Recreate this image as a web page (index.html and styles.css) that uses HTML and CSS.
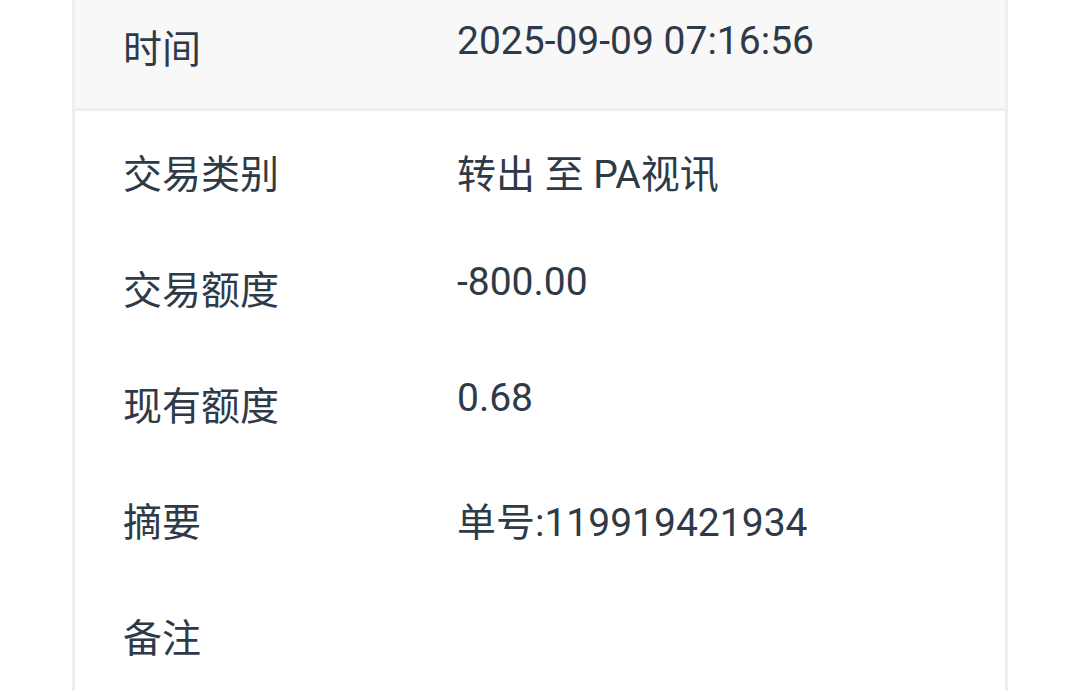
FILE: index.html
```html
<!DOCTYPE html>
<html lang="zh-CN">
<head>
<meta charset="utf-8">
<link rel="stylesheet" href="styles.css">
</head>
<body>
<div class="card">
  <div class="row head"><span class="label">时间</span><span class="value">2025-09-09 07:16:56</span></div>
  <div class="row"><span class="label">交易类别</span><span class="value">转出 至 PA视讯</span></div>
  <div class="row"><span class="label">交易额度</span><span class="value">-800.00</span></div>
  <div class="row"><span class="label">现有额度</span><span class="value">0.68</span></div>
  <div class="row"><span class="label">摘要</span><span class="value">单号:119919421934</span></div>
  <div class="row"><span class="label">备注</span><span class="value"></span></div>
</div>
</body>
</html>
```

FILE: styles.css
```css
html, body {
  margin: 0;
  padding: 0;
  background: #ffffff;
  overflow: hidden;
}
body {
  font-family: Roboto, "Noto Sans CJK SC", sans-serif;
  font-size: 39px;
  color: #2f3a48;
}
.card {
  margin-left: 72px;
  width: 930px;
  border-left: 3px solid #ededed;
  border-right: 3px solid #ededed;
}
.row {
  display: flex;
  align-items: flex-start;
  box-sizing: border-box;
  height: 116px;
  padding-top: 32px;
  line-height: normal;
}
.head {
  height: 111px;
  padding-top: 18px;
  background: #f8f8f8;
  border-bottom: 3px solid #eeeeee;
}
.label {
  width: 334px;
  padding-left: 48px;
  flex: none;
}
.value {
  flex: 1;
}
```
